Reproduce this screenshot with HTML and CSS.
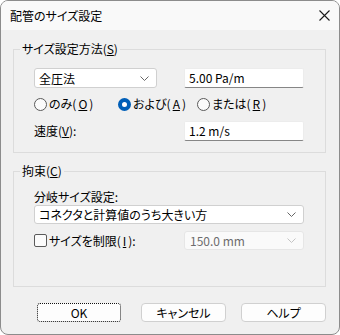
FILE: index.html
```html
<!DOCTYPE html>
<html lang="ja">
  <head>
    <meta charset="UTF-8" />
    <meta name="viewport" content="width=device-width, initial-scale=1" />
    <title>配管のサイズ設定</title>
    <link rel="stylesheet" href="styles.css">
  </head>
  <body>
    <div class="window">
      <div class="titlebar">
        <span class="title">配管のサイズ設定</span>
        <svg class="close" width="11" height="11" viewBox="0 0 11 11">
          <path d="M0.5 0.5 L10.5 10.5 M10.5 0.5 L0.5 10.5" stroke="#1a1a1a" stroke-width="1.1" fill="none" />
        </svg>
      </div>

      <div class="content">
        <fieldset class="group group-method">
          <legend>サイズ設定方法(<u>S</u>)</legend>
          <div class="row">
            <div class="combo combo-method">
              <span>全圧法</span>
              <svg class="chevron" width="9" height="5" viewBox="0 0 9 5"><path d="M0.5 0.5 L4.5 4.5 L8.5 0.5" stroke="#666" fill="none" /></svg>
            </div>
            <div class="edit">5.00 Pa/m</div>
          </div>
          <div class="radios">
            <label class="radio"><span class="dot"></span>のみ(<u>O</u>)</label>
            <label class="radio"><span class="dot checked"></span>および(<u>A</u>)</label>
            <label class="radio"><span class="dot"></span>または(<u>R</u>)</label>
          </div>
          <div class="row row-speed">
            <span class="label">速度(<u>V</u>):</span>
            <div class="edit">1.2 m/s</div>
          </div>
        </fieldset>

        <fieldset class="group group-constraint">
          <legend>拘束(<u>C</u>)</legend>
          <div class="label label-branch">分岐サイズ設定:</div>
          <div class="combo combo-wide">
            <span>コネクタと計算値のうち大きい方</span>
            <svg class="chevron" width="9" height="5" viewBox="0 0 9 5"><path d="M0.5 0.5 L4.5 4.5 L8.5 0.5" stroke="#666" fill="none" /></svg>
          </div>
          <div class="row row-limit">
            <label class="check"><span class="box"></span>サイズを制限(<u>I</u>):</label>
            <div class="combo combo-disabled">
              <span>150.0 mm</span>
              <svg class="chevron" width="9" height="5" viewBox="0 0 9 5"><path d="M0.5 0.5 L4.5 4.5 L8.5 0.5" stroke="#c4c4c4" fill="none" /></svg>
            </div>
          </div>
        </fieldset>

        <div class="buttons">
          <button class="btn btn-default">OK</button>
          <button class="btn">キャンセル</button>
          <button class="btn">ヘルプ</button>
        </div>
      </div>
    </div>
  </body>
</html>
```

FILE: styles.css
```css
* {
  box-sizing: border-box;
  margin: 0;
  padding: 0;
}
body {
  font-family: "Noto Sans CJK JP", "Noto Sans", sans-serif;
  font-size: 12px;
  font-feature-settings: "palt";
  color: #000;
  background: #fff;
}
u {
  text-decoration-thickness: 1px;
  text-underline-offset: 1px;
}
.window {
  width: 340px;
  height: 335px;
  border: 1px solid #8c8c8c;
  border-radius: 8px;
  overflow: hidden;
  background: #f0f0f0;
  display: flex;
  flex-direction: column;
}
.titlebar {
  height: 29px;
  background: #f9f9f9;
  display: flex;
  align-items: center;
  justify-content: space-between;
  padding: 0 9px 0 9px;
}
.title {
  font-size: 12px;
  line-height: 16px;
}
.close {
  display: block;
}
.content {
  padding: 0 13px 0 12px;
}
.group {
  border: 1px solid #dcdcdc;
  padding: 10px 21px 11px 20px;
}
.group legend {
  margin-left: -14px;
  padding: 0 2px;
  line-height: 18px;
}
.group-method {
  margin-top: 10px;
}
.group-constraint {
  margin-top: 9px;
  padding-bottom: 36px;
}
.row {
  display: flex;
  justify-content: space-between;
  align-items: center;
}
.label {
  line-height: 16px;
}
.combo {
  height: 20px;
  background: #fff;
  border: 1px solid #d0d0d0;
  border-radius: 3px;
  display: flex;
  align-items: center;
  justify-content: space-between;
  padding: 0 7px 0 4px;
  white-space: nowrap;
}
.combo-method {
  width: 123px;
}
.combo-wide {
  height: 19px;
}
.combo-disabled {
  width: 120px;
  height: 19px;
  background: #fafafa;
  border-color: #e6e6e6;
  color: #6d6d6d;
  padding-left: 5px;
}
.chevron {
  display: block;
}
.edit {
  width: 120px;
  height: 20px;
  background: #fff;
  border: 1px solid #ececec;
  border-bottom-color: #868686;
  border-radius: 2px;
  padding: 0 4px;
  line-height: 18px;
  margin-top: -1px;
}
.radios {
  display: grid;
  grid-template-columns: 84px 79px auto;
  margin-top: 8px;
  height: 16px;
}
.radio,
.check {
  display: flex;
  align-items: center;
  gap: 2px;
  line-height: 16px;
}
.dot {
  width: 13px;
  height: 13px;
  border: 1px solid #5a5a5a;
  border-radius: 50%;
  background: #fbfbfb;
}
.dot.checked {
  border: 4px solid #005fb8;
  background: #fff;
}
.box {
  width: 13px;
  height: 13px;
  border: 1px solid #5a5a5a;
  border-radius: 2px;
  background: #fbfbfb;
}
.row-speed {
  margin-top: 9px;
}
.row-speed .edit {
  margin-top: 0;
}
.label-branch {
  margin-top: -1px;
}
.row-limit {
  margin-top: 7px;
}
.buttons {
  display: flex;
  justify-content: flex-end;
  gap: 15px;
  margin-top: 16px;
}
.btn {
  width: 85px;
  height: 19px;
  font-family: inherit;
  font-size: 12px;
  font-weight: normal;
  font-feature-settings: "palt";
  background: #fdfdfd;
  border: 1px solid #d0d0d0;
  border-radius: 4px;
  color: #000;
  line-height: 16px;
}
.btn-default {
  width: 84px;
  margin-right: 5px;
  border: 1px dotted #111;
  border-radius: 3px;
}
```
